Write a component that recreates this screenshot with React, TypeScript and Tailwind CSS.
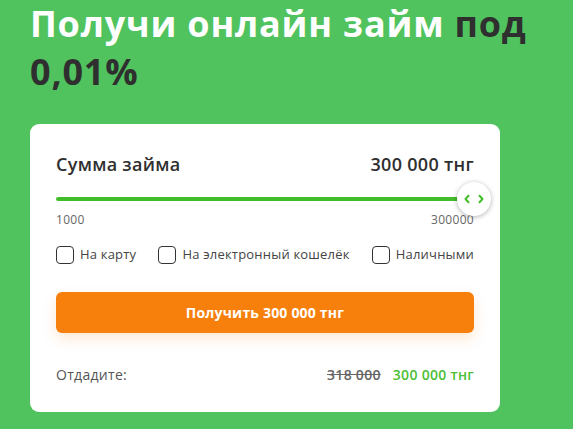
import { useState } from 'react';

const FONT = { fontFamily: '"Open Sans", "Noto Sans", sans-serif' };

const METHODS = ['На карту', 'На электронный кошелёк', 'Наличными'];

function Checkbox({ label }: { label: string }) {
  const [checked, setChecked] = useState(false);
  return (
    <label className="flex h-[18px] cursor-pointer items-center gap-[6px]">
      <span
        onClick={() => setChecked((prev) => !prev)}
        className={`h-[18px] w-[18px] rounded-[4px] border-[1.5px] border-[#333] ${checked ? 'bg-[#4bbf2f]' : 'bg-white'}`}
      />
      <span className="text-[13px] tracking-[0.2px] text-[#444]">{label}</span>
    </label>
  );
}

export default function App() {
  return (
    <div className="min-h-[429px] w-full bg-[#50c35e] px-[30px]" style={FONT}>
      <h1 className="text-[36px] font-bold leading-[48px] tracking-[0.8px] text-white">
        Получи онлайн займ <span className="text-[#2f2f2f]">под</span>
        <br />
        <span className="text-[#2f2f2f]">0,01%</span>
      </h1>

      <div className="mt-[28px] w-[470px] rounded-[9px] bg-white px-[26px] pb-[28px] pt-[28px]">
        <div className="flex h-[25px] items-center justify-between text-[#2f2f2f]">
          <span className="text-[18px] font-semibold tracking-[0.3px]">Сумма займа</span>
          <span className="text-[18px] font-semibold tracking-[0.3px]">300 000 тнг</span>
        </div>

        {/* слайдер */}
        <div className="relative mt-[20px] h-[4px] rounded-full bg-[#42bd2a]">
          <div className="absolute right-[-17px] top-1/2 flex h-[34px] w-[34px] -translate-y-1/2 items-center justify-center gap-[8px] rounded-full bg-white shadow-[0_1px_5px_rgba(0,0,0,0.3)]">
            <svg width="6" height="10" viewBox="0 0 6 10" fill="none">
              <path d="M4.5 1.8L1.5 5L4.5 8.2" stroke="#42bd2a" strokeWidth="2" strokeLinecap="round" strokeLinejoin="round" />
            </svg>
            <svg width="6" height="10" viewBox="0 0 6 10" fill="none">
              <path d="M1.5 1.8L4.5 5L1.5 8.2" stroke="#42bd2a" strokeWidth="2" strokeLinecap="round" strokeLinejoin="round" />
            </svg>
          </div>
        </div>
        <div className="mt-[11px] flex h-[16px] items-center justify-between text-[12px] tracking-[0.3px] text-[#666]">
          <span>1000</span>
          <span>300000</span>
        </div>

        <div className="mt-[18px] flex items-center justify-between">
          {METHODS.map((m) => (
            <Checkbox key={m} label={m} />
          ))}
        </div>

        <button className="mt-[28px] flex h-[41px] w-full items-center justify-center rounded-[6px] bg-[#f77f0b] text-[14px] font-bold tracking-[0.2px] text-white shadow-[0_6px_14px_rgba(247,127,11,0.18)]">
          Получить 300 000 тнг
        </button>

        <div className="mt-[31px] flex h-[20px] items-center justify-between text-[14px] tracking-[0.3px]">
          <span className="text-[#555]">Отдадите:</span>
          <div className="flex items-center gap-[12px] font-semibold">
            <span className="text-[#666] line-through">318 000</span>
            <span className="text-[#4cbf35]">300 000 тнг</span>
          </div>
        </div>
      </div>
    </div>
  );
}
